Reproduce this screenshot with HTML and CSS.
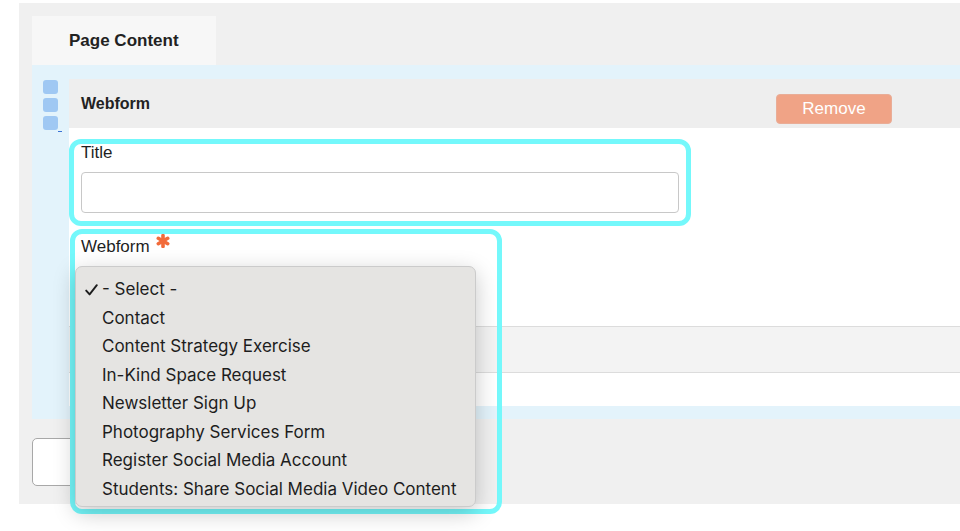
FILE: index.html
```html
<!DOCTYPE html>
<html lang="en">
<head>
<meta charset="utf-8">
<title>Page Content</title>
<link rel="stylesheet" href="styles.css">
</head>
<body>
<div class="page">
  <div class="tabs">
    <div class="tab">Page Content</div>
  </div>
  <div class="section">
    <div class="handle">
      <span class="sq"></span>
      <span class="sq"></span>
      <span class="sq"></span>
      <span class="dash"></span>
    </div>
    <div class="item">
      <div class="item-head">
        <span class="item-title">Webform</span>
        <button class="remove">Remove</button>
      </div>
      <div class="item-body">
        <div class="field">
          <label class="label">Title</label>
          <div class="input"></div>
        </div>
        <div class="field field-webform">
          <label class="label">Webform <svg class="req" viewBox="0 0 14 14" width="14" height="14" aria-hidden="true"><g stroke="#f26b3a" stroke-width="3.6" stroke-linecap="round"><line x1="7" y1="1.6" x2="7" y2="12.4"/><line x1="2.3" y1="4.3" x2="11.7" y2="9.7"/><line x1="2.3" y1="9.7" x2="11.7" y2="4.3"/></g></svg></label>
          <div class="select-space"></div>
        </div>
        <div class="bar"></div>
        <div class="after-bar"></div>
      </div>
    </div>
  </div>
  <div class="footer">
    <div class="add-btn"></div>
  </div>
</div>

<div class="outline outline-title"></div>
<div class="outline outline-webform"></div>

<ul class="menu">
  <li class="selected"><svg class="check" viewBox="0 0 13 12" width="13" height="12" aria-hidden="true"><path d="M1.2 6.6 L4.6 10.4 L11.8 1.2" fill="none" stroke="#1d1d1d" stroke-width="1.9" stroke-linecap="round" stroke-linejoin="round"/></svg>- Select -</li>
  <li>Contact</li>
  <li>Content Strategy Exercise</li>
  <li>In-Kind Space Request</li>
  <li>Newsletter Sign Up</li>
  <li>Photography Services Form</li>
  <li>Register Social Media Account</li>
  <li>Students: Share Social Media Video Content</li>
</ul>
</body>
</html>
```

FILE: styles.css
```css
html, body {
  margin: 0;
  padding: 0;
  background: #ffffff;
  width: 960px;
  height: 531px;
  overflow: hidden;
  font-family: "Liberation Sans", Arial, sans-serif;
  color: #1f1f1f;
}

.page {
  margin: 3px 0 0 19px;
  background: #f0f0f0;
  padding: 13px 0 18px 13px;
}

.tabs {
  display: flex;
}

.tab {
  width: 147px;
  height: 49px;
  padding-left: 37px;
  background: #f7f7f7;
  font-size: 17px;
  font-weight: bold;
  line-height: 49px;
  color: #222;
}

.section {
  display: flex;
  background: #e3f3fb;
  padding: 14px 0 13px 11px;
}

.handle {
  width: 26px;
  flex: none;
  display: flex;
  flex-direction: column;
  gap: 4px;
  padding-top: 1px;
  position: relative;
}

.sq {
  width: 14.5px;
  height: 14px;
  border-radius: 3px;
  background: #9fc8f3;
}

.dash {
  position: absolute;
  left: 14.5px;
  top: 52px;
  width: 4px;
  height: 1px;
  background: #3b74d6;
}

.item {
  flex: 1;
  min-width: 0;
}

.item-head {
  display: flex;
  align-items: flex-start;
  height: 49px;
  background: #eeeeee;
}

.item-title {
  padding-left: 12px;
  font-size: 16px;
  font-weight: bold;
  line-height: 49px;
  color: #222;
}

.remove {
  margin: 15px 68px 0 auto;
  width: 116px;
  height: 30px;
  border: 1px solid #e9ad97;
  border-radius: 4px;
  background: #f0a386;
  color: #ffffff;
  font-family: "Liberation Sans", Arial, sans-serif;
  font-size: 17px;
  padding: 0;
}

.item-body {
  background: #ffffff;
  padding-top: 15px;
}

.field {
  padding-left: 12px;
}

.label {
  display: block;
  height: 20px;
  font-size: 17px;
  line-height: 20px;
  color: #1f1f1f;
}

.req {
  vertical-align: top;
  margin-top: -3px;
  margin-left: 2px;
}

.input {
  margin-top: 9px;
  width: 596px;
  height: 39px;
  border: 1px solid #c8c8c8;
  border-radius: 4px;
  background: #fff;
}

.field-webform {
  margin-top: 24px;
}

.select-space {
  height: 69px;
}

.bar {
  height: 45px;
  background: #f3f3f3;
  border-top: 1px solid #dcdcdc;
  border-bottom: 1px solid #dcdcdc;
}

.after-bar {
  height: 33px;
}

.footer {
  padding-top: 19px;
}

.add-btn {
  width: 120px;
  height: 46px;
  border: 1px solid #a8a8a8;
  border-radius: 5px;
  background: #ffffff;
}

.outline {
  position: absolute;
  border: 5px solid #74f8fb;
  border-radius: 12px;
  box-sizing: border-box;
}

.outline-title {
  left: 69px;
  top: 139px;
  width: 622px;
  height: 87px;
}

.outline-webform {
  left: 70px;
  top: 229px;
  width: 432px;
  height: 285px;
}

.menu {
  position: absolute;
  left: 75px;
  top: 266px;
  width: 401px;
  height: 241px;
  box-sizing: border-box;
  margin: 0;
  padding: 8px 0 0 26px;
  list-style: none;
  background: #e5e4e2;
  border: 1px solid #cbcbcb;
  border-radius: 7px;
  box-shadow: 0 6px 22px rgba(0, 0, 0, 0.22);
  font-family: Inter, "Noto Sans", sans-serif;
  font-size: 17px;
  line-height: 28.5px;
  color: #1d1d1d;
}

.menu li {
  position: relative;
  white-space: nowrap;
}

.check {
  position: absolute;
  left: -17px;
  top: 9px;
}
```
